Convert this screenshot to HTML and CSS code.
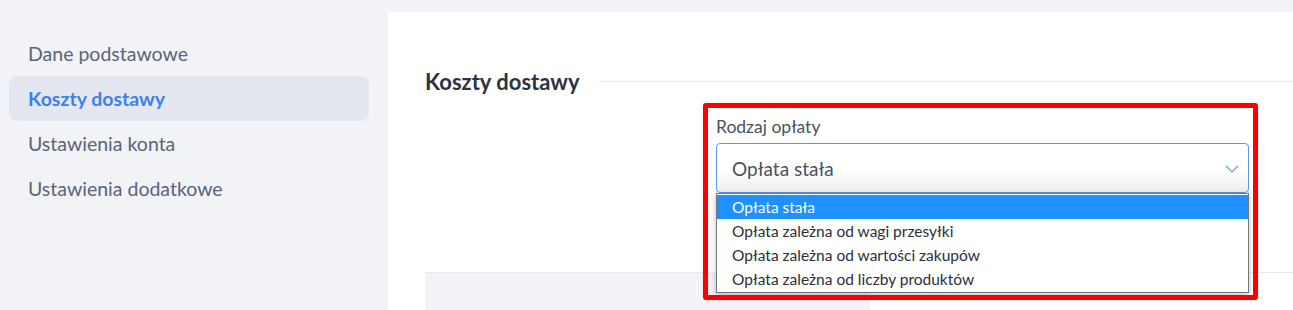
FILE: index.html
```html
<!DOCTYPE html>
<html lang="pl">
<head>
    <meta charset="UTF-8">
    <meta name="viewport" content="width=device-width, initial-scale=1.0">
    <title>Koszty dostawy</title>
    <link rel="stylesheet" href="styles.css">
</head>
<body>
    <aside class="sidebar">
        <a class="nav-item" href="#">Dane podstawowe</a>
        <a class="nav-item active" href="#">Koszty dostawy</a>
        <a class="nav-item" href="#">Ustawienia konta</a>
        <a class="nav-item" href="#">Ustawienia dodatkowe</a>
    </aside>

    <main class="panel">
        <div class="section-head">
            <h2 class="section-title">Koszty dostawy</h2>
            <div class="section-line"></div>
        </div>

        <div class="field">
            <div class="highlight"></div>
            <label class="field-label">Rodzaj opłaty</label>
            <div class="select-wrap">
                <div class="select">
                    <span>Opłata stała</span>
                    <svg class="chevron" width="14" height="8" viewBox="0 0 14 8">
                        <path d="M1 1l6 6 6-6" fill="none" stroke="#6b9de6" stroke-width="1.2"/>
                    </svg>
                </div>
                <ul class="options">
                    <li class="selected">Opłata stała</li>
                    <li>Opłata zależna od wagi przesyłki</li>
                    <li>Opłata zależna od wartości zakupów</li>
                    <li>Opłata zależna od liczby produktów</li>
                </ul>
            </div>
        </div>

        <div class="table-area">
            <div class="table-side"></div>
        </div>
    </main>
</body>
</html>
```

FILE: styles.css
```css
:root {
    --page-bg: #f2f3f7;
    --nav-text: #5b6478;
    --nav-active: #3b82f0;
    --line: #e6e8ec;
}

html {
    overflow: hidden;
}

body {
    margin: 0;
    background: var(--page-bg);
    font-family: 'Lato', 'Noto Sans', sans-serif;
    display: flex;
    height: 310px;
    overflow: hidden;
}

.sidebar {
    width: 388px;
    flex-shrink: 0;
    padding-top: 31px;
    display: flex;
    flex-direction: column;
}

.nav-item {
    display: block;
    height: 45px;
    line-height: 45px;
    margin: 0 19px 0 9px;
    padding: 0 19px;
    border-radius: 8px;
    font-size: 19.5px;
    color: var(--nav-text);
    text-decoration: none;
}

.nav-item.active {
    background: #e4e7f0;
    color: var(--nav-active);
    font-weight: bold;
}

.panel {
    flex: 1;
    margin-top: 12px;
    background: #fff;
    padding: 56px 0 0 37px;
}

.section-head {
    display: flex;
    align-items: center;
    height: 28px;
}

.section-title {
    margin: 0;
    font-size: 22px;
    color: #2d3340;
    line-height: 28px;
}

.section-line {
    flex: 1;
    height: 1px;
    background: var(--line);
    margin-left: 19px;
    margin-top: -2px;
}

.field {
    position: relative;
    margin: 21px 0 0 291px;
    width: 533px;
}

.highlight {
    position: absolute;
    top: -14px;
    left: -13px;
    right: -9px;
    height: 197px;
    box-sizing: border-box;
    border: 5px solid #ff0000;
    border-radius: 3px;
    box-shadow: 0 0 1px rgba(255, 0, 0, 0.6);
    z-index: 3;
    pointer-events: none;
}

.field-label {
    display: block;
    font-size: 17.5px;
    line-height: 20px;
    color: #4b5160;
    margin-bottom: 6px;
}

.select-wrap {
    position: relative;
}

.select {
    height: 50px;
    box-sizing: border-box;
    border: 1px solid #5d97ee;
    border-radius: 4px;
    background: linear-gradient(#fff 55%, #eeeeee);
    display: flex;
    align-items: center;
    justify-content: space-between;
    padding: 0 9px 0 15px;
    font-size: 19px;
    color: #4a505e;
}

.chevron {
    margin-top: 2px;
}

.options {
    position: absolute;
    top: 50px;
    left: 0;
    right: 0;
    margin: 0;
    padding: 1px 0;
    list-style: none;
    background: #fff;
    border: 1px solid #767676;
    box-shadow: 0 2px 6px rgba(0, 0, 0, 0.25);
    z-index: 2;
}

.options li {
    height: 24px;
    line-height: 24px;
    padding-left: 15px;
    font-size: 15.5px;
    color: #2b2f3a;
}

.options li.selected {
    background: #1e90ff;
    color: #fff;
}

.table-area {
    margin-top: 79px;
    border-top: 1px solid var(--line);
    height: 37px;
    display: flex;
}

.table-side {
    width: 445px;
    background: var(--page-bg);
}
```
